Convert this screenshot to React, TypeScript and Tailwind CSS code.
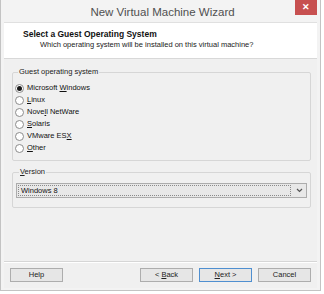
import React, { useState } from 'react';

const osList: { label: string; key: number }[] = [
  { label: 'Microsoft Windows', key: 10 },
  { label: 'Linux', key: 0 },
  { label: 'Novell NetWare', key: 4 },
  { label: 'Solaris', key: 0 },
  { label: 'VMware ESX', key: 9 },
  { label: 'Other', key: 0 },
];

// underline the access-key letter like Windows does
const Mnemonic: React.FC<{ text: string; at: number }> = ({ text, at }) => (
  <span>
    {text.slice(0, at)}
    <span className="underline underline-offset-1">{text[at]}</span>
    {text.slice(at + 1)}
  </span>
);

const Radio: React.FC<{ checked: boolean }> = ({ checked }) => (
  <span className="w-[9px] h-[9px] rounded-full border border-[#8c8c8c] bg-white flex items-center justify-center shrink-0">
    {checked && <span className="w-[5px] h-[5px] rounded-full bg-[#1a1a1a]"></span>}
  </span>
);

const Button: React.FC<{ children: React.ReactNode; primary?: boolean; className?: string }> = ({ children, primary, className }) => (
  <button
    className={`w-[53px] h-[14px] text-[7.5px] leading-none text-[#222] bg-[#e6e6e6] border ${primary ? 'border-[#4f8fd0]' : 'border-[#adadad]'} flex items-center justify-center ${className ?? ''}`}
  >
    <span className="whitespace-pre">{children}</span>
  </button>
);

const App: React.FC = () => {
  const [selected, setSelected] = useState(0);

  return (
    <div className="w-[324px] h-[294px] bg-white font-['Liberation_Sans',sans-serif] overflow-hidden">
      <div className="w-[321px] h-[291px] bg-[#f3f3f3] border-l border-r border-b border-[#c3c3c3] flex flex-col">
        {/* Title bar */}
        <div className="h-[22px] shrink-0 flex items-start relative">
          <div className="flex-1 text-center text-[11.5px] text-[#505050] pt-[4px] pl-[4px]">New Virtual Machine Wizard</div>
          <div className="absolute right-[3px] top-0 w-[22px] h-[15px] bg-[#c75050] flex items-center justify-center text-white text-[9px] font-bold leading-none">
            ✕
          </div>
        </div>

        {/* Client area */}
        <div className="mx-[3px] flex-1 bg-[#f0f0f0] border-t border-[#e0e0e0] flex flex-col mb-[2px]">
          {/* Header */}
          <div className="h-[36px] bg-white border-b border-[#d8d8d8] shrink-0 pt-[6px]">
            <div className="pl-[19px] text-[8.5px] font-bold text-[#111] leading-[10px]">Select a Guest Operating System</div>
            <div className="pl-[36px] text-[7.5px] text-[#222] leading-[10px] mt-[1px]">Which operating system will be installed on this virtual machine?</div>
          </div>

          {/* Guest OS group */}
          <fieldset className="ml-[8px] mr-[6px] mt-[8px] border border-[#d6d6d6] rounded-[2px] px-[2px] pt-[5px] pb-[6px]">
            <legend className="ml-[3px] px-[1px] text-[7.5px] leading-[10px] text-[#222]">Guest operating system</legend>
            <div className="flex flex-col">
              {osList.map((os, i) => (
                <label key={os.label} className="h-[12px] flex items-center gap-[3px] text-[7.5px] text-[#111]" onClick={() => setSelected(i)}>
                  <Radio checked={selected === i} />
                  <Mnemonic text={os.label} at={os.key} />
                </label>
              ))}
            </div>
          </fieldset>

          {/* Version group */}
          <fieldset className="ml-[8px] mr-[6px] mt-[6px] border border-[#d6d6d6] rounded-[2px] px-[3px] pt-[6px] pb-[9px]">
            <legend className="ml-[3px] px-[1px] text-[7.5px] leading-[10px] text-[#222]">
              <Mnemonic text="Version" at={0} />
            </legend>
            <div className="h-[15px] flex border border-[#acacac] bg-[#e8e8e8]">
              <div className="flex-1 m-[1px] border border-dotted border-[#8a8a8a] text-[7.5px] text-[#111] flex items-center pl-[2px]">Windows 8</div>
              <div className="w-[14px] flex items-center justify-center">
                <svg width="7" height="5" viewBox="0 0 7 5">
                  <path d="M1 1 L3.5 3.5 L6 1" fill="none" stroke="#555" strokeWidth="1.2" />
                </svg>
              </div>
            </div>
          </fieldset>

          <div className="flex-1"></div>

          {/* Buttons */}
          <div className="border-t border-[#d6d6d6] shadow-[inset_0_1px_0_#fff] h-[27px] flex items-center px-[6px] pb-[1px]">
            <Button>Help</Button>
            <div className="flex-1"></div>
            <Button>{'< '}<Mnemonic text="Back" at={0} /></Button>
            <Button primary className="ml-[6px]"><Mnemonic text="Next" at={0} />{' >'}</Button>
            <Button className="ml-[6px]">Cancel</Button>
          </div>
        </div>
      </div>
    </div>
  );
};

export default App;
